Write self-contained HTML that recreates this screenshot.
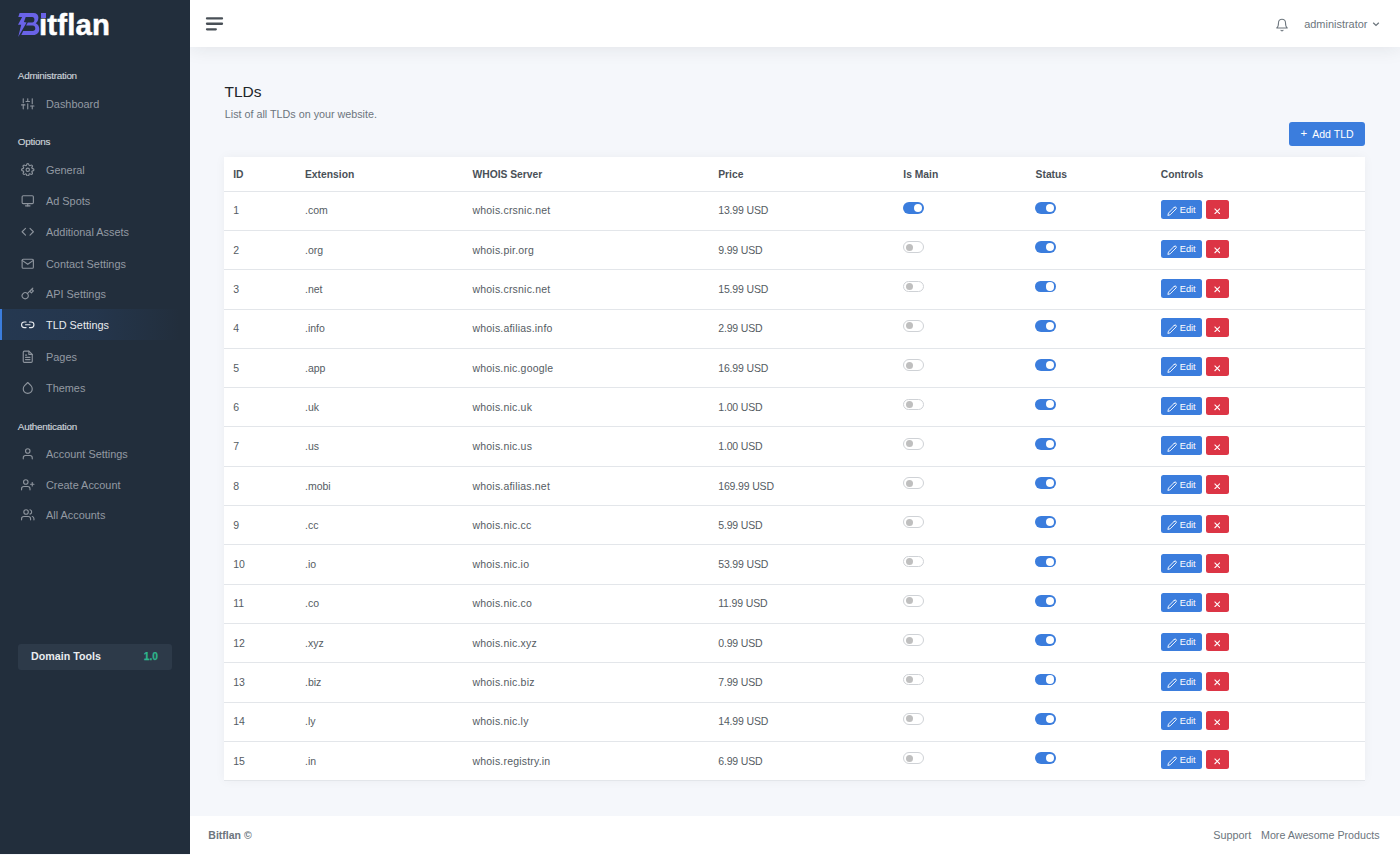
<!DOCTYPE html><html><head><meta charset="utf-8"><title>TLDs</title><style>
*{margin:0;padding:0;box-sizing:border-box}
html,body{width:1400px;height:855px;overflow:hidden;background:#f5f7fb;font-family:"Liberation Sans",sans-serif}
.t{position:absolute;white-space:nowrap}
.ic{position:absolute;display:block}
.abs{position:absolute}
</style></head><body>
<div class="abs" style="left:190px;top:816px;width:1210px;height:39px;background:#fff"></div>
<div class="abs" style="left:190px;top:0;width:1210px;height:47px;background:#fff;box-shadow:0 0 20px 0 rgba(33,37,41,.1)"></div>
<div class="abs" style="left:0;top:0;width:190px;height:854px;background:#222e3c"></div>
<svg class="ic" style="left:0;top:0;width:60px;height:45px" viewBox="0 0 60 45">
<path fill="#6a63e8" d="M19.6,12.9 H33.5 C36.6,12.9 38.4,14.8 38.4,17.6 C38.4,20.3 37.3,22.2 35.7,23.2 C38,24.1 39.3,26.3 39.3,29 C39.3,32.6 37,35 33.3,35 H21.3 L23.2,31 H32.6 C34.3,31 35.3,30 35.3,28.2 C35.3,26.5 34.3,25.4 32.6,25.4 H26.1 L27.8,22.5 H32.2 C33.6,22.5 34.4,21.5 34.4,19.7 C34.4,17.9 33.6,16.9 32.2,16.9 H18.3 Z"/>
<path fill="#6a63e8" d="M22.4,16.6 L25.9,16.6 L23.9,21.9 L26.6,22.6 L18.2,36.9 L21.2,24.75 L18.0,24.75 Z"/>
</svg>
<div class="t" style="left:39.00px;top:9.90px;font-size:29.3px;line-height:29.3px;color:#fff;font-weight:bold;letter-spacing:0.2px;-webkit-text-stroke:0.5px #fff">ıtflan</div>
<div class="abs" style="left:40.8px;top:13.1px;width:5.3px;height:4.6px;background:#6a63e8"></div>
<div class="t" style="left:17.80px;top:71.42px;font-size:9.9px;line-height:9.9px;color:#ced4da;font-weight:normal;letter-spacing:-0.25px;-webkit-text-stroke:0.15px #ced4da">Administration</div>
<div class="t" style="left:17.80px;top:136.62px;font-size:9.9px;line-height:9.9px;color:#ced4da;font-weight:normal;letter-spacing:-0.25px;-webkit-text-stroke:0.15px #ced4da">Options</div>
<div class="t" style="left:17.80px;top:421.62px;font-size:9.9px;line-height:9.9px;color:#ced4da;font-weight:normal;letter-spacing:-0.25px;-webkit-text-stroke:0.15px #ced4da">Authentication</div>
<svg class="ic" style="left:21px;top:96.7px;width:13.5px;height:13.5px;" viewBox="0 0 24 24" fill="none" stroke="#8d949d" stroke-width="2" stroke-linecap="round" stroke-linejoin="round"><line x1="4" y1="21" x2="4" y2="14"/><line x1="4" y1="10" x2="4" y2="3"/><line x1="12" y1="21" x2="12" y2="12"/><line x1="12" y1="8" x2="12" y2="3"/><line x1="20" y1="21" x2="20" y2="16"/><line x1="20" y1="12" x2="20" y2="3"/><line x1="1" y1="14" x2="7" y2="14"/><line x1="9" y1="8" x2="15" y2="8"/><line x1="17" y1="16" x2="23" y2="16"/></svg>
<div class="t" style="left:46.00px;top:98.77px;font-size:10.9px;line-height:10.9px;color:#939aa3;font-weight:normal;">Dashboard</div>
<svg class="ic" style="left:21px;top:162.6px;width:13.5px;height:13.5px;" viewBox="0 0 24 24" fill="none" stroke="#8d949d" stroke-width="2" stroke-linecap="round" stroke-linejoin="round"><circle cx="12" cy="12" r="3"/><path d="M19.4 15a1.65 1.65 0 0 0 .33 1.82l.06.06a2 2 0 0 1 0 2.83 2 2 0 0 1-2.83 0l-.06-.06a1.65 1.65 0 0 0-1.82-.33 1.65 1.65 0 0 0-1 1.51V21a2 2 0 0 1-2 2 2 2 0 0 1-2-2v-.09A1.650 1.65 0 0 0 9 19.4a1.65 1.65 0 0 0-1.82.33l-.06.06a2 2 0 0 1-2.83 0 2 2 0 0 1 0-2.830l.06-.06a1.65 1.65 0 0 0 .33-1.82 1.65 1.65 0 0 0-1.51-1H3a2 2 0 0 1-2-2 2 2 0 0 1 2-2h.09A1.65 1.65 0 0 0 4.6 9a1.65 1.65 0 0 0-.33-1.82l-.06-.06a2 2 0 0 1 0-2.83 2 2 0 0 1 2.83 0l.06.06a1.65 1.65 0 0 0 1.82.33H9a1.65 1.65 0 0 0 1-1.51V3a2 2 0 0 1 2-2 2 2 0 0 1 2 2v.09a1.65 1.65 0 0 0 1 1.51 1.65 1.65 0 0 0 1.82-.33l.06-.06a2 2 0 0 1 2.83 0 2 2 0 0 1 0 2.83l-.06.06a1.65 1.65 0 0 0-.33 1.82V9a1.65 1.65 0 0 0 1.51 1H21a2 2 0 0 1 2 2 2 2 0 0 1-2 2h-.09a1.65 1.65 0 0 0-1.51 1z"/></svg>
<div class="t" style="left:46.00px;top:164.67px;font-size:10.9px;line-height:10.9px;color:#939aa3;font-weight:normal;">General</div>
<svg class="ic" style="left:21px;top:193.7px;width:13.5px;height:13.5px;" viewBox="0 0 24 24" fill="none" stroke="#8d949d" stroke-width="2" stroke-linecap="round" stroke-linejoin="round"><rect x="2" y="3" width="20" height="14" rx="2" ry="2"/><line x1="8" y1="21" x2="16" y2="21"/><line x1="12" y1="17" x2="12" y2="21"/></svg>
<div class="t" style="left:46.00px;top:195.77px;font-size:10.9px;line-height:10.9px;color:#939aa3;font-weight:normal;">Ad Spots</div>
<svg class="ic" style="left:21px;top:225.0px;width:13.5px;height:13.5px;" viewBox="0 0 24 24" fill="none" stroke="#8d949d" stroke-width="2" stroke-linecap="round" stroke-linejoin="round"><polyline points="16 18 22 12 16 6"/><polyline points="8 6 2 12 8 18"/></svg>
<div class="t" style="left:46.00px;top:227.07px;font-size:10.9px;line-height:10.9px;color:#939aa3;font-weight:normal;">Additional Assets</div>
<svg class="ic" style="left:21px;top:256.5px;width:13.5px;height:13.5px;" viewBox="0 0 24 24" fill="none" stroke="#8d949d" stroke-width="2" stroke-linecap="round" stroke-linejoin="round"><path d="M4 4h16c1.1 0 2 .9 2 2v12c0 1.1-.9 2-2 2H4c-1.1 0-2-.9-2-2V6c0-1.1.9-2 2-2z"/><polyline points="22,6 12,13 2,6"/></svg>
<div class="t" style="left:46.00px;top:258.57px;font-size:10.9px;line-height:10.9px;color:#939aa3;font-weight:normal;">Contact Settings</div>
<svg class="ic" style="left:21px;top:287.3px;width:13.5px;height:13.5px;" viewBox="0 0 24 24" fill="none" stroke="#8d949d" stroke-width="2" stroke-linecap="round" stroke-linejoin="round"><path d="M21 2l-2 2m-7.61 7.61a5.5 5.5 0 1 1-7.778 7.778 5.5 5.5 0 0 1 7.777-7.777zm0 0L15.5 7.5m0 0l3 3L22 7l-3-3m-3.5 3.5L19 4"/></svg>
<div class="t" style="left:46.00px;top:289.37px;font-size:10.9px;line-height:10.9px;color:#939aa3;font-weight:normal;">API Settings</div>
<div class="abs" style="left:0;top:309px;width:190px;height:31px;background:linear-gradient(90deg,rgba(59,125,221,.13),rgba(59,125,221,.10) 50%,rgba(59,125,221,0) 95%)"></div>
<div class="abs" style="left:0;top:309px;width:2px;height:31px;background:#3b7ddd"></div>
<svg class="ic" style="left:21px;top:318.4px;width:13.5px;height:13.5px;" viewBox="0 0 24 24" fill="none" stroke="#e9ecef" stroke-width="2" stroke-linecap="round" stroke-linejoin="round"><path d="M15 7h3a5 5 0 0 1 5 5 5 5 0 0 1-5 5h-3m-6 0H6a5 5 0 0 1-5-5 5 5 0 0 1 5-5h3"/><line x1="8" y1="12" x2="16" y2="12"/></svg>
<div class="t" style="left:46.00px;top:320.47px;font-size:10.9px;line-height:10.9px;color:#e9ecef;font-weight:normal;">TLD Settings</div>
<svg class="ic" style="left:21px;top:349.59999999999997px;width:13.5px;height:13.5px;" viewBox="0 0 24 24" fill="none" stroke="#8d949d" stroke-width="2" stroke-linecap="round" stroke-linejoin="round"><path d="M14 2H6a2 2 0 0 0-2 2v16a2 2 0 0 0 2 2h12a2 2 0 0 0 2-2V8z"/><polyline points="14 2 14 8 20 8"/><line x1="16" y1="13" x2="8" y2="13"/><line x1="16" y1="17" x2="8" y2="17"/><polyline points="10 9 9 9 8 9"/></svg>
<div class="t" style="left:46.00px;top:351.67px;font-size:10.9px;line-height:10.9px;color:#939aa3;font-weight:normal;">Pages</div>
<svg class="ic" style="left:21px;top:380.7px;width:13.5px;height:13.5px;" viewBox="0 0 24 24" fill="none" stroke="#8d949d" stroke-width="2" stroke-linecap="round" stroke-linejoin="round"><path d="M12 2.69l5.66 5.66a8 8 0 1 1-11.31 0z"/></svg>
<div class="t" style="left:46.00px;top:382.77px;font-size:10.9px;line-height:10.9px;color:#939aa3;font-weight:normal;">Themes</div>
<svg class="ic" style="left:21px;top:447.0px;width:13.5px;height:13.5px;" viewBox="0 0 24 24" fill="none" stroke="#8d949d" stroke-width="2" stroke-linecap="round" stroke-linejoin="round"><path d="M20 21v-2a4 4 0 0 0-4-4H8a4 4 0 0 0-4 4v2"/><circle cx="12" cy="7" r="4"/></svg>
<div class="t" style="left:46.00px;top:449.07px;font-size:10.9px;line-height:10.9px;color:#939aa3;font-weight:normal;">Account Settings</div>
<svg class="ic" style="left:21px;top:478.0px;width:13.5px;height:13.5px;" viewBox="0 0 24 24" fill="none" stroke="#8d949d" stroke-width="2" stroke-linecap="round" stroke-linejoin="round"><path d="M16 21v-2a4 4 0 0 0-4-4H5a4 4 0 0 0-4 4v2"/><circle cx="8.5" cy="7" r="4"/><line x1="20" y1="8" x2="20" y2="14"/><line x1="23" y1="11" x2="17" y2="11"/></svg>
<div class="t" style="left:46.00px;top:480.07px;font-size:10.9px;line-height:10.9px;color:#939aa3;font-weight:normal;">Create Account</div>
<svg class="ic" style="left:21px;top:508.40000000000003px;width:13.5px;height:13.5px;" viewBox="0 0 24 24" fill="none" stroke="#8d949d" stroke-width="2" stroke-linecap="round" stroke-linejoin="round"><path d="M17 21v-2a4 4 0 0 0-4-4H5a4 4 0 0 0-4 4v2"/><circle cx="9" cy="7" r="4"/><path d="M23 21v-2a4 4 0 0 0-3-3.87"/><path d="M16 3.13a4 4 0 0 1 0 7.75"/></svg>
<div class="t" style="left:46.00px;top:510.47px;font-size:10.9px;line-height:10.9px;color:#939aa3;font-weight:normal;">All Accounts</div>
<div class="abs" style="left:17.5px;top:644px;width:154.5px;height:26px;background:#2d3a49;border-radius:3px"></div>
<div class="t" style="left:31.00px;top:651.24px;font-size:10.7px;line-height:10.7px;color:#e9ecef;font-weight:bold;">Domain Tools</div>
<div class="t" style="left:143.80px;top:651.67px;font-size:10.2px;line-height:10.2px;color:#2db68c;font-weight:bold;-webkit-text-stroke:0.25px #2db68c">1.0</div>
<svg class="ic" style="left:200px;top:10px;width:30px;height:30px" viewBox="0 0 30 30"><g stroke="#495057" stroke-width="2.3" stroke-linecap="round"><path d="M7,8.4 H22"/><path d="M7,13.75 H22"/><path d="M7,19.3 H15.8"/></g></svg>
<svg class="ic" style="left:1275px;top:17.5px;width:14px;height:14px;" viewBox="0 0 24 24" fill="none" stroke="#6c757d" stroke-width="1.8" stroke-linecap="round" stroke-linejoin="round"><path d="M18 8A6 6 0 0 0 6 8c0 7-3 9-3 9h18s-3-2-3-9"/><path d="M13.73 21a2 2 0 0 1-3.46 0"/></svg>
<div class="t" style="left:1304.20px;top:18.73px;font-size:10.95px;line-height:10.95px;color:#6c757d;font-weight:normal;">administrator</div>
<svg class="ic" style="left:1372px;top:20px;width:8px;height:8px" viewBox="0 0 8 8"><path d="M1.2,2.8 L4,5.4 L6.8,2.8" fill="none" stroke="#6c757d" stroke-width="1.3"/></svg>
<div class="t" style="left:224.50px;top:83.78px;font-size:15.5px;line-height:15.5px;color:#212529;font-weight:normal;">TLDs</div>
<div class="t" style="left:224.80px;top:108.60px;font-size:10.75px;line-height:10.75px;color:#6c757d;font-weight:normal;">List of all TLDs on your website.</div>
<div class="abs" style="left:1288.5px;top:122px;width:76.5px;height:24px;background:#3b7ddd;border-radius:3px"></div>
<div class="t" style="left:1300.50px;top:128.47px;font-size:11.5px;line-height:11.5px;color:#fff;font-weight:normal;">+</div>
<div class="t" style="left:1312.20px;top:129.27px;font-size:10.55px;line-height:10.55px;color:#fff;font-weight:normal;">Add TLD</div>
<div class="abs" style="left:224px;top:157px;width:1141px;height:624px;background:#fff;box-shadow:0 0 10px 0 rgba(33,37,41,.045)"></div>
<div class="abs" style="left:224px;top:780px;width:1141px;height:1px;background:#e3e6ea"></div>
<div class="t" style="left:233.20px;top:170.28px;font-size:10.3px;line-height:10.3px;color:#495057;font-weight:bold;">ID</div>
<div class="t" style="left:305.00px;top:170.28px;font-size:10.3px;line-height:10.3px;color:#495057;font-weight:bold;">Extension</div>
<div class="t" style="left:472.50px;top:170.28px;font-size:10.3px;line-height:10.3px;color:#495057;font-weight:bold;">WHOIS Server</div>
<div class="t" style="left:718.20px;top:170.28px;font-size:10.3px;line-height:10.3px;color:#495057;font-weight:bold;">Price</div>
<div class="t" style="left:903.30px;top:170.28px;font-size:10.3px;line-height:10.3px;color:#495057;font-weight:bold;">Is Main</div>
<div class="t" style="left:1035.60px;top:170.28px;font-size:10.3px;line-height:10.3px;color:#495057;font-weight:bold;">Status</div>
<div class="t" style="left:1160.80px;top:170.28px;font-size:10.3px;line-height:10.3px;color:#495057;font-weight:bold;">Controls</div>
<div class="abs" style="left:224px;top:190.60px;width:1141px;height:1px;background:#e3e6ea"></div>
<div class="t" style="left:233.20px;top:205.41px;font-size:10.5px;line-height:10.5px;color:#555c63;font-weight:normal;">1</div>
<div class="t" style="left:305.00px;top:205.41px;font-size:10.5px;line-height:10.5px;color:#555c63;font-weight:normal;">.com</div>
<div class="t" style="left:472.50px;top:205.41px;font-size:10.5px;line-height:10.5px;color:#555c63;font-weight:normal;letter-spacing:0.2px">whois.crsnic.net</div>
<div class="t" style="left:718.20px;top:205.41px;font-size:10.5px;line-height:10.5px;color:#555c63;font-weight:normal;letter-spacing:-0.15px">13.99 USD</div>
<div class="abs" style="left:903.2px;top:202.05px;width:20.7px;height:11.7px;border-radius:6px;background:#3b7ddd"></div>
<div class="abs" style="left:913.80px;top:203.80px;width:8.2px;height:8.2px;border-radius:50%;background:#fff"></div>
<div class="abs" style="left:1035.4px;top:202.05px;width:20.7px;height:11.7px;border-radius:6px;background:#3b7ddd"></div>
<div class="abs" style="left:1046.00px;top:203.80px;width:8.2px;height:8.2px;border-radius:50%;background:#fff"></div>
<div class="abs" style="left:1161px;top:200.20px;width:41px;height:18.8px;background:#3b7ddd;border-radius:2.5px"></div>
<svg class="ic" style="left:1167.0px;top:205.89999999999998px;width:10.3px;height:10.3px;" viewBox="0 0 24 24" fill="none" stroke="#fff" stroke-width="2.1" stroke-linecap="round" stroke-linejoin="round"><path d="M17 3a2.828 2.828 0 1 1 4 4L7.5 20.5 2 22l1.5-5.5L17 3z"/></svg>
<div class="t" style="left:1179.80px;top:206.11px;font-size:9.2px;line-height:9.2px;color:#fff;font-weight:normal;">Edit</div>
<div class="abs" style="left:1205.6px;top:200.20px;width:23.2px;height:18.8px;background:#dc3545;border-radius:2.5px"></div>
<svg class="ic" style="left:1213.8px;top:207.80px;width:6.6px;height:6.6px" viewBox="0 0 6.6 6.6"><path d="M0.6,0.6 L6.0,6.0 M6.0,0.6 L0.6,6.0" stroke="#fff" stroke-width="1.1"/></svg>
<div class="abs" style="left:224px;top:229.90px;width:1141px;height:1px;background:#e3e6ea"></div>
<div class="t" style="left:233.20px;top:244.71px;font-size:10.5px;line-height:10.5px;color:#555c63;font-weight:normal;">2</div>
<div class="t" style="left:305.00px;top:244.71px;font-size:10.5px;line-height:10.5px;color:#555c63;font-weight:normal;">.org</div>
<div class="t" style="left:472.50px;top:244.71px;font-size:10.5px;line-height:10.5px;color:#555c63;font-weight:normal;letter-spacing:0.2px">whois.pir.org</div>
<div class="t" style="left:718.20px;top:244.71px;font-size:10.5px;line-height:10.5px;color:#555c63;font-weight:normal;letter-spacing:-0.15px">9.99 USD</div>
<div class="abs" style="left:903.2px;top:241.35px;width:20.7px;height:11.7px;border-radius:6px;background:#fff;border:1px solid #cfd2d6"></div>
<div class="abs" style="left:906.00px;top:243.70px;width:7px;height:7px;border-radius:50%;background:#bfbfbf"></div>
<div class="abs" style="left:1035.4px;top:241.35px;width:20.7px;height:11.7px;border-radius:6px;background:#3b7ddd"></div>
<div class="abs" style="left:1046.00px;top:243.10px;width:8.2px;height:8.2px;border-radius:50%;background:#fff"></div>
<div class="abs" style="left:1161px;top:239.50px;width:41px;height:18.8px;background:#3b7ddd;border-radius:2.5px"></div>
<svg class="ic" style="left:1167.0px;top:245.19999999999996px;width:10.3px;height:10.3px;" viewBox="0 0 24 24" fill="none" stroke="#fff" stroke-width="2.1" stroke-linecap="round" stroke-linejoin="round"><path d="M17 3a2.828 2.828 0 1 1 4 4L7.5 20.5 2 22l1.5-5.5L17 3z"/></svg>
<div class="t" style="left:1179.80px;top:245.41px;font-size:9.2px;line-height:9.2px;color:#fff;font-weight:normal;">Edit</div>
<div class="abs" style="left:1205.6px;top:239.50px;width:23.2px;height:18.8px;background:#dc3545;border-radius:2.5px"></div>
<svg class="ic" style="left:1213.8px;top:247.10px;width:6.6px;height:6.6px" viewBox="0 0 6.6 6.6"><path d="M0.6,0.6 L6.0,6.0 M6.0,0.6 L0.6,6.0" stroke="#fff" stroke-width="1.1"/></svg>
<div class="abs" style="left:224px;top:269.20px;width:1141px;height:1px;background:#e3e6ea"></div>
<div class="t" style="left:233.20px;top:284.01px;font-size:10.5px;line-height:10.5px;color:#555c63;font-weight:normal;">3</div>
<div class="t" style="left:305.00px;top:284.01px;font-size:10.5px;line-height:10.5px;color:#555c63;font-weight:normal;">.net</div>
<div class="t" style="left:472.50px;top:284.01px;font-size:10.5px;line-height:10.5px;color:#555c63;font-weight:normal;letter-spacing:0.2px">whois.crsnic.net</div>
<div class="t" style="left:718.20px;top:284.01px;font-size:10.5px;line-height:10.5px;color:#555c63;font-weight:normal;letter-spacing:-0.15px">15.99 USD</div>
<div class="abs" style="left:903.2px;top:280.65px;width:20.7px;height:11.7px;border-radius:6px;background:#fff;border:1px solid #cfd2d6"></div>
<div class="abs" style="left:906.00px;top:283.00px;width:7px;height:7px;border-radius:50%;background:#bfbfbf"></div>
<div class="abs" style="left:1035.4px;top:280.65px;width:20.7px;height:11.7px;border-radius:6px;background:#3b7ddd"></div>
<div class="abs" style="left:1046.00px;top:282.40px;width:8.2px;height:8.2px;border-radius:50%;background:#fff"></div>
<div class="abs" style="left:1161px;top:278.80px;width:41px;height:18.8px;background:#3b7ddd;border-radius:2.5px"></div>
<svg class="ic" style="left:1167.0px;top:284.5px;width:10.3px;height:10.3px;" viewBox="0 0 24 24" fill="none" stroke="#fff" stroke-width="2.1" stroke-linecap="round" stroke-linejoin="round"><path d="M17 3a2.828 2.828 0 1 1 4 4L7.5 20.5 2 22l1.5-5.5L17 3z"/></svg>
<div class="t" style="left:1179.80px;top:284.71px;font-size:9.2px;line-height:9.2px;color:#fff;font-weight:normal;">Edit</div>
<div class="abs" style="left:1205.6px;top:278.80px;width:23.2px;height:18.8px;background:#dc3545;border-radius:2.5px"></div>
<svg class="ic" style="left:1213.8px;top:286.40px;width:6.6px;height:6.6px" viewBox="0 0 6.6 6.6"><path d="M0.6,0.6 L6.0,6.0 M6.0,0.6 L0.6,6.0" stroke="#fff" stroke-width="1.1"/></svg>
<div class="abs" style="left:224px;top:308.50px;width:1141px;height:1px;background:#e3e6ea"></div>
<div class="t" style="left:233.20px;top:323.31px;font-size:10.5px;line-height:10.5px;color:#555c63;font-weight:normal;">4</div>
<div class="t" style="left:305.00px;top:323.31px;font-size:10.5px;line-height:10.5px;color:#555c63;font-weight:normal;">.info</div>
<div class="t" style="left:472.50px;top:323.31px;font-size:10.5px;line-height:10.5px;color:#555c63;font-weight:normal;letter-spacing:0.2px">whois.afilias.info</div>
<div class="t" style="left:718.20px;top:323.31px;font-size:10.5px;line-height:10.5px;color:#555c63;font-weight:normal;letter-spacing:-0.15px">2.99 USD</div>
<div class="abs" style="left:903.2px;top:319.95px;width:20.7px;height:11.7px;border-radius:6px;background:#fff;border:1px solid #cfd2d6"></div>
<div class="abs" style="left:906.00px;top:322.30px;width:7px;height:7px;border-radius:50%;background:#bfbfbf"></div>
<div class="abs" style="left:1035.4px;top:319.95px;width:20.7px;height:11.7px;border-radius:6px;background:#3b7ddd"></div>
<div class="abs" style="left:1046.00px;top:321.70px;width:8.2px;height:8.2px;border-radius:50%;background:#fff"></div>
<div class="abs" style="left:1161px;top:318.10px;width:41px;height:18.8px;background:#3b7ddd;border-radius:2.5px"></div>
<svg class="ic" style="left:1167.0px;top:323.8px;width:10.3px;height:10.3px;" viewBox="0 0 24 24" fill="none" stroke="#fff" stroke-width="2.1" stroke-linecap="round" stroke-linejoin="round"><path d="M17 3a2.828 2.828 0 1 1 4 4L7.5 20.5 2 22l1.5-5.5L17 3z"/></svg>
<div class="t" style="left:1179.80px;top:324.01px;font-size:9.2px;line-height:9.2px;color:#fff;font-weight:normal;">Edit</div>
<div class="abs" style="left:1205.6px;top:318.10px;width:23.2px;height:18.8px;background:#dc3545;border-radius:2.5px"></div>
<svg class="ic" style="left:1213.8px;top:325.70px;width:6.6px;height:6.6px" viewBox="0 0 6.6 6.6"><path d="M0.6,0.6 L6.0,6.0 M6.0,0.6 L0.6,6.0" stroke="#fff" stroke-width="1.1"/></svg>
<div class="abs" style="left:224px;top:347.80px;width:1141px;height:1px;background:#e3e6ea"></div>
<div class="t" style="left:233.20px;top:362.61px;font-size:10.5px;line-height:10.5px;color:#555c63;font-weight:normal;">5</div>
<div class="t" style="left:305.00px;top:362.61px;font-size:10.5px;line-height:10.5px;color:#555c63;font-weight:normal;">.app</div>
<div class="t" style="left:472.50px;top:362.61px;font-size:10.5px;line-height:10.5px;color:#555c63;font-weight:normal;letter-spacing:0.2px">whois.nic.google</div>
<div class="t" style="left:718.20px;top:362.61px;font-size:10.5px;line-height:10.5px;color:#555c63;font-weight:normal;letter-spacing:-0.15px">16.99 USD</div>
<div class="abs" style="left:903.2px;top:359.25px;width:20.7px;height:11.7px;border-radius:6px;background:#fff;border:1px solid #cfd2d6"></div>
<div class="abs" style="left:906.00px;top:361.60px;width:7px;height:7px;border-radius:50%;background:#bfbfbf"></div>
<div class="abs" style="left:1035.4px;top:359.25px;width:20.7px;height:11.7px;border-radius:6px;background:#3b7ddd"></div>
<div class="abs" style="left:1046.00px;top:361.00px;width:8.2px;height:8.2px;border-radius:50%;background:#fff"></div>
<div class="abs" style="left:1161px;top:357.40px;width:41px;height:18.8px;background:#3b7ddd;border-radius:2.5px"></div>
<svg class="ic" style="left:1167.0px;top:363.09999999999997px;width:10.3px;height:10.3px;" viewBox="0 0 24 24" fill="none" stroke="#fff" stroke-width="2.1" stroke-linecap="round" stroke-linejoin="round"><path d="M17 3a2.828 2.828 0 1 1 4 4L7.5 20.5 2 22l1.5-5.5L17 3z"/></svg>
<div class="t" style="left:1179.80px;top:363.31px;font-size:9.2px;line-height:9.2px;color:#fff;font-weight:normal;">Edit</div>
<div class="abs" style="left:1205.6px;top:357.40px;width:23.2px;height:18.8px;background:#dc3545;border-radius:2.5px"></div>
<svg class="ic" style="left:1213.8px;top:365.00px;width:6.6px;height:6.6px" viewBox="0 0 6.6 6.6"><path d="M0.6,0.6 L6.0,6.0 M6.0,0.6 L0.6,6.0" stroke="#fff" stroke-width="1.1"/></svg>
<div class="abs" style="left:224px;top:387.10px;width:1141px;height:1px;background:#e3e6ea"></div>
<div class="t" style="left:233.20px;top:401.91px;font-size:10.5px;line-height:10.5px;color:#555c63;font-weight:normal;">6</div>
<div class="t" style="left:305.00px;top:401.91px;font-size:10.5px;line-height:10.5px;color:#555c63;font-weight:normal;">.uk</div>
<div class="t" style="left:472.50px;top:401.91px;font-size:10.5px;line-height:10.5px;color:#555c63;font-weight:normal;letter-spacing:0.2px">whois.nic.uk</div>
<div class="t" style="left:718.20px;top:401.91px;font-size:10.5px;line-height:10.5px;color:#555c63;font-weight:normal;letter-spacing:-0.15px">1.00 USD</div>
<div class="abs" style="left:903.2px;top:398.55px;width:20.7px;height:11.7px;border-radius:6px;background:#fff;border:1px solid #cfd2d6"></div>
<div class="abs" style="left:906.00px;top:400.90px;width:7px;height:7px;border-radius:50%;background:#bfbfbf"></div>
<div class="abs" style="left:1035.4px;top:398.55px;width:20.7px;height:11.7px;border-radius:6px;background:#3b7ddd"></div>
<div class="abs" style="left:1046.00px;top:400.30px;width:8.2px;height:8.2px;border-radius:50%;background:#fff"></div>
<div class="abs" style="left:1161px;top:396.70px;width:41px;height:18.8px;background:#3b7ddd;border-radius:2.5px"></div>
<svg class="ic" style="left:1167.0px;top:402.40000000000003px;width:10.3px;height:10.3px;" viewBox="0 0 24 24" fill="none" stroke="#fff" stroke-width="2.1" stroke-linecap="round" stroke-linejoin="round"><path d="M17 3a2.828 2.828 0 1 1 4 4L7.5 20.5 2 22l1.5-5.5L17 3z"/></svg>
<div class="t" style="left:1179.80px;top:402.61px;font-size:9.2px;line-height:9.2px;color:#fff;font-weight:normal;">Edit</div>
<div class="abs" style="left:1205.6px;top:396.70px;width:23.2px;height:18.8px;background:#dc3545;border-radius:2.5px"></div>
<svg class="ic" style="left:1213.8px;top:404.30px;width:6.6px;height:6.6px" viewBox="0 0 6.6 6.6"><path d="M0.6,0.6 L6.0,6.0 M6.0,0.6 L0.6,6.0" stroke="#fff" stroke-width="1.1"/></svg>
<div class="abs" style="left:224px;top:426.40px;width:1141px;height:1px;background:#e3e6ea"></div>
<div class="t" style="left:233.20px;top:441.21px;font-size:10.5px;line-height:10.5px;color:#555c63;font-weight:normal;">7</div>
<div class="t" style="left:305.00px;top:441.21px;font-size:10.5px;line-height:10.5px;color:#555c63;font-weight:normal;">.us</div>
<div class="t" style="left:472.50px;top:441.21px;font-size:10.5px;line-height:10.5px;color:#555c63;font-weight:normal;letter-spacing:0.2px">whois.nic.us</div>
<div class="t" style="left:718.20px;top:441.21px;font-size:10.5px;line-height:10.5px;color:#555c63;font-weight:normal;letter-spacing:-0.15px">1.00 USD</div>
<div class="abs" style="left:903.2px;top:437.85px;width:20.7px;height:11.7px;border-radius:6px;background:#fff;border:1px solid #cfd2d6"></div>
<div class="abs" style="left:906.00px;top:440.20px;width:7px;height:7px;border-radius:50%;background:#bfbfbf"></div>
<div class="abs" style="left:1035.4px;top:437.85px;width:20.7px;height:11.7px;border-radius:6px;background:#3b7ddd"></div>
<div class="abs" style="left:1046.00px;top:439.60px;width:8.2px;height:8.2px;border-radius:50%;background:#fff"></div>
<div class="abs" style="left:1161px;top:436.00px;width:41px;height:18.8px;background:#3b7ddd;border-radius:2.5px"></div>
<svg class="ic" style="left:1167.0px;top:441.7px;width:10.3px;height:10.3px;" viewBox="0 0 24 24" fill="none" stroke="#fff" stroke-width="2.1" stroke-linecap="round" stroke-linejoin="round"><path d="M17 3a2.828 2.828 0 1 1 4 4L7.5 20.5 2 22l1.5-5.5L17 3z"/></svg>
<div class="t" style="left:1179.80px;top:441.91px;font-size:9.2px;line-height:9.2px;color:#fff;font-weight:normal;">Edit</div>
<div class="abs" style="left:1205.6px;top:436.00px;width:23.2px;height:18.8px;background:#dc3545;border-radius:2.5px"></div>
<svg class="ic" style="left:1213.8px;top:443.60px;width:6.6px;height:6.6px" viewBox="0 0 6.6 6.6"><path d="M0.6,0.6 L6.0,6.0 M6.0,0.6 L0.6,6.0" stroke="#fff" stroke-width="1.1"/></svg>
<div class="abs" style="left:224px;top:465.70px;width:1141px;height:1px;background:#e3e6ea"></div>
<div class="t" style="left:233.20px;top:480.51px;font-size:10.5px;line-height:10.5px;color:#555c63;font-weight:normal;">8</div>
<div class="t" style="left:305.00px;top:480.51px;font-size:10.5px;line-height:10.5px;color:#555c63;font-weight:normal;">.mobi</div>
<div class="t" style="left:472.50px;top:480.51px;font-size:10.5px;line-height:10.5px;color:#555c63;font-weight:normal;letter-spacing:0.2px">whois.afilias.net</div>
<div class="t" style="left:718.20px;top:480.51px;font-size:10.5px;line-height:10.5px;color:#555c63;font-weight:normal;letter-spacing:-0.15px">169.99 USD</div>
<div class="abs" style="left:903.2px;top:477.15px;width:20.7px;height:11.7px;border-radius:6px;background:#fff;border:1px solid #cfd2d6"></div>
<div class="abs" style="left:906.00px;top:479.50px;width:7px;height:7px;border-radius:50%;background:#bfbfbf"></div>
<div class="abs" style="left:1035.4px;top:477.15px;width:20.7px;height:11.7px;border-radius:6px;background:#3b7ddd"></div>
<div class="abs" style="left:1046.00px;top:478.90px;width:8.2px;height:8.2px;border-radius:50%;background:#fff"></div>
<div class="abs" style="left:1161px;top:475.30px;width:41px;height:18.8px;background:#3b7ddd;border-radius:2.5px"></div>
<svg class="ic" style="left:1167.0px;top:480.99999999999994px;width:10.3px;height:10.3px;" viewBox="0 0 24 24" fill="none" stroke="#fff" stroke-width="2.1" stroke-linecap="round" stroke-linejoin="round"><path d="M17 3a2.828 2.828 0 1 1 4 4L7.5 20.5 2 22l1.5-5.5L17 3z"/></svg>
<div class="t" style="left:1179.80px;top:481.21px;font-size:9.2px;line-height:9.2px;color:#fff;font-weight:normal;">Edit</div>
<div class="abs" style="left:1205.6px;top:475.30px;width:23.2px;height:18.8px;background:#dc3545;border-radius:2.5px"></div>
<svg class="ic" style="left:1213.8px;top:482.90px;width:6.6px;height:6.6px" viewBox="0 0 6.6 6.6"><path d="M0.6,0.6 L6.0,6.0 M6.0,0.6 L0.6,6.0" stroke="#fff" stroke-width="1.1"/></svg>
<div class="abs" style="left:224px;top:505.00px;width:1141px;height:1px;background:#e3e6ea"></div>
<div class="t" style="left:233.20px;top:519.81px;font-size:10.5px;line-height:10.5px;color:#555c63;font-weight:normal;">9</div>
<div class="t" style="left:305.00px;top:519.81px;font-size:10.5px;line-height:10.5px;color:#555c63;font-weight:normal;">.cc</div>
<div class="t" style="left:472.50px;top:519.81px;font-size:10.5px;line-height:10.5px;color:#555c63;font-weight:normal;letter-spacing:0.2px">whois.nic.cc</div>
<div class="t" style="left:718.20px;top:519.81px;font-size:10.5px;line-height:10.5px;color:#555c63;font-weight:normal;letter-spacing:-0.15px">5.99 USD</div>
<div class="abs" style="left:903.2px;top:516.45px;width:20.7px;height:11.7px;border-radius:6px;background:#fff;border:1px solid #cfd2d6"></div>
<div class="abs" style="left:906.00px;top:518.80px;width:7px;height:7px;border-radius:50%;background:#bfbfbf"></div>
<div class="abs" style="left:1035.4px;top:516.45px;width:20.7px;height:11.7px;border-radius:6px;background:#3b7ddd"></div>
<div class="abs" style="left:1046.00px;top:518.20px;width:8.2px;height:8.2px;border-radius:50%;background:#fff"></div>
<div class="abs" style="left:1161px;top:514.60px;width:41px;height:18.8px;background:#3b7ddd;border-radius:2.5px"></div>
<svg class="ic" style="left:1167.0px;top:520.3000000000001px;width:10.3px;height:10.3px;" viewBox="0 0 24 24" fill="none" stroke="#fff" stroke-width="2.1" stroke-linecap="round" stroke-linejoin="round"><path d="M17 3a2.828 2.828 0 1 1 4 4L7.5 20.5 2 22l1.5-5.5L17 3z"/></svg>
<div class="t" style="left:1179.80px;top:520.51px;font-size:9.2px;line-height:9.2px;color:#fff;font-weight:normal;">Edit</div>
<div class="abs" style="left:1205.6px;top:514.60px;width:23.2px;height:18.8px;background:#dc3545;border-radius:2.5px"></div>
<svg class="ic" style="left:1213.8px;top:522.20px;width:6.6px;height:6.6px" viewBox="0 0 6.6 6.6"><path d="M0.6,0.6 L6.0,6.0 M6.0,0.6 L0.6,6.0" stroke="#fff" stroke-width="1.1"/></svg>
<div class="abs" style="left:224px;top:544.30px;width:1141px;height:1px;background:#e3e6ea"></div>
<div class="t" style="left:233.20px;top:559.11px;font-size:10.5px;line-height:10.5px;color:#555c63;font-weight:normal;">10</div>
<div class="t" style="left:305.00px;top:559.11px;font-size:10.5px;line-height:10.5px;color:#555c63;font-weight:normal;">.io</div>
<div class="t" style="left:472.50px;top:559.11px;font-size:10.5px;line-height:10.5px;color:#555c63;font-weight:normal;letter-spacing:0.2px">whois.nic.io</div>
<div class="t" style="left:718.20px;top:559.11px;font-size:10.5px;line-height:10.5px;color:#555c63;font-weight:normal;letter-spacing:-0.15px">53.99 USD</div>
<div class="abs" style="left:903.2px;top:555.75px;width:20.7px;height:11.7px;border-radius:6px;background:#fff;border:1px solid #cfd2d6"></div>
<div class="abs" style="left:906.00px;top:558.10px;width:7px;height:7px;border-radius:50%;background:#bfbfbf"></div>
<div class="abs" style="left:1035.4px;top:555.75px;width:20.7px;height:11.7px;border-radius:6px;background:#3b7ddd"></div>
<div class="abs" style="left:1046.00px;top:557.50px;width:8.2px;height:8.2px;border-radius:50%;background:#fff"></div>
<div class="abs" style="left:1161px;top:553.90px;width:41px;height:18.8px;background:#3b7ddd;border-radius:2.5px"></div>
<svg class="ic" style="left:1167.0px;top:559.6px;width:10.3px;height:10.3px;" viewBox="0 0 24 24" fill="none" stroke="#fff" stroke-width="2.1" stroke-linecap="round" stroke-linejoin="round"><path d="M17 3a2.828 2.828 0 1 1 4 4L7.5 20.5 2 22l1.5-5.5L17 3z"/></svg>
<div class="t" style="left:1179.80px;top:559.81px;font-size:9.2px;line-height:9.2px;color:#fff;font-weight:normal;">Edit</div>
<div class="abs" style="left:1205.6px;top:553.90px;width:23.2px;height:18.8px;background:#dc3545;border-radius:2.5px"></div>
<svg class="ic" style="left:1213.8px;top:561.50px;width:6.6px;height:6.6px" viewBox="0 0 6.6 6.6"><path d="M0.6,0.6 L6.0,6.0 M6.0,0.6 L0.6,6.0" stroke="#fff" stroke-width="1.1"/></svg>
<div class="abs" style="left:224px;top:583.60px;width:1141px;height:1px;background:#e3e6ea"></div>
<div class="t" style="left:233.20px;top:598.41px;font-size:10.5px;line-height:10.5px;color:#555c63;font-weight:normal;">11</div>
<div class="t" style="left:305.00px;top:598.41px;font-size:10.5px;line-height:10.5px;color:#555c63;font-weight:normal;">.co</div>
<div class="t" style="left:472.50px;top:598.41px;font-size:10.5px;line-height:10.5px;color:#555c63;font-weight:normal;letter-spacing:0.2px">whois.nic.co</div>
<div class="t" style="left:718.20px;top:598.41px;font-size:10.5px;line-height:10.5px;color:#555c63;font-weight:normal;letter-spacing:-0.15px">11.99 USD</div>
<div class="abs" style="left:903.2px;top:595.05px;width:20.7px;height:11.7px;border-radius:6px;background:#fff;border:1px solid #cfd2d6"></div>
<div class="abs" style="left:906.00px;top:597.40px;width:7px;height:7px;border-radius:50%;background:#bfbfbf"></div>
<div class="abs" style="left:1035.4px;top:595.05px;width:20.7px;height:11.7px;border-radius:6px;background:#3b7ddd"></div>
<div class="abs" style="left:1046.00px;top:596.80px;width:8.2px;height:8.2px;border-radius:50%;background:#fff"></div>
<div class="abs" style="left:1161px;top:593.20px;width:41px;height:18.8px;background:#3b7ddd;border-radius:2.5px"></div>
<svg class="ic" style="left:1167.0px;top:598.9000000000001px;width:10.3px;height:10.3px;" viewBox="0 0 24 24" fill="none" stroke="#fff" stroke-width="2.1" stroke-linecap="round" stroke-linejoin="round"><path d="M17 3a2.828 2.828 0 1 1 4 4L7.5 20.5 2 22l1.5-5.5L17 3z"/></svg>
<div class="t" style="left:1179.80px;top:599.11px;font-size:9.2px;line-height:9.2px;color:#fff;font-weight:normal;">Edit</div>
<div class="abs" style="left:1205.6px;top:593.20px;width:23.2px;height:18.8px;background:#dc3545;border-radius:2.5px"></div>
<svg class="ic" style="left:1213.8px;top:600.80px;width:6.6px;height:6.6px" viewBox="0 0 6.6 6.6"><path d="M0.6,0.6 L6.0,6.0 M6.0,0.6 L0.6,6.0" stroke="#fff" stroke-width="1.1"/></svg>
<div class="abs" style="left:224px;top:622.90px;width:1141px;height:1px;background:#e3e6ea"></div>
<div class="t" style="left:233.20px;top:637.71px;font-size:10.5px;line-height:10.5px;color:#555c63;font-weight:normal;">12</div>
<div class="t" style="left:305.00px;top:637.71px;font-size:10.5px;line-height:10.5px;color:#555c63;font-weight:normal;">.xyz</div>
<div class="t" style="left:472.50px;top:637.71px;font-size:10.5px;line-height:10.5px;color:#555c63;font-weight:normal;letter-spacing:0.2px">whois.nic.xyz</div>
<div class="t" style="left:718.20px;top:637.71px;font-size:10.5px;line-height:10.5px;color:#555c63;font-weight:normal;letter-spacing:-0.15px">0.99 USD</div>
<div class="abs" style="left:903.2px;top:634.35px;width:20.7px;height:11.7px;border-radius:6px;background:#fff;border:1px solid #cfd2d6"></div>
<div class="abs" style="left:906.00px;top:636.70px;width:7px;height:7px;border-radius:50%;background:#bfbfbf"></div>
<div class="abs" style="left:1035.4px;top:634.35px;width:20.7px;height:11.7px;border-radius:6px;background:#3b7ddd"></div>
<div class="abs" style="left:1046.00px;top:636.10px;width:8.2px;height:8.2px;border-radius:50%;background:#fff"></div>
<div class="abs" style="left:1161px;top:632.50px;width:41px;height:18.8px;background:#3b7ddd;border-radius:2.5px"></div>
<svg class="ic" style="left:1167.0px;top:638.2px;width:10.3px;height:10.3px;" viewBox="0 0 24 24" fill="none" stroke="#fff" stroke-width="2.1" stroke-linecap="round" stroke-linejoin="round"><path d="M17 3a2.828 2.828 0 1 1 4 4L7.5 20.5 2 22l1.5-5.5L17 3z"/></svg>
<div class="t" style="left:1179.80px;top:638.41px;font-size:9.2px;line-height:9.2px;color:#fff;font-weight:normal;">Edit</div>
<div class="abs" style="left:1205.6px;top:632.50px;width:23.2px;height:18.8px;background:#dc3545;border-radius:2.5px"></div>
<svg class="ic" style="left:1213.8px;top:640.10px;width:6.6px;height:6.6px" viewBox="0 0 6.6 6.6"><path d="M0.6,0.6 L6.0,6.0 M6.0,0.6 L0.6,6.0" stroke="#fff" stroke-width="1.1"/></svg>
<div class="abs" style="left:224px;top:662.20px;width:1141px;height:1px;background:#e3e6ea"></div>
<div class="t" style="left:233.20px;top:677.01px;font-size:10.5px;line-height:10.5px;color:#555c63;font-weight:normal;">13</div>
<div class="t" style="left:305.00px;top:677.01px;font-size:10.5px;line-height:10.5px;color:#555c63;font-weight:normal;">.biz</div>
<div class="t" style="left:472.50px;top:677.01px;font-size:10.5px;line-height:10.5px;color:#555c63;font-weight:normal;letter-spacing:0.2px">whois.nic.biz</div>
<div class="t" style="left:718.20px;top:677.01px;font-size:10.5px;line-height:10.5px;color:#555c63;font-weight:normal;letter-spacing:-0.15px">7.99 USD</div>
<div class="abs" style="left:903.2px;top:673.65px;width:20.7px;height:11.7px;border-radius:6px;background:#fff;border:1px solid #cfd2d6"></div>
<div class="abs" style="left:906.00px;top:676.00px;width:7px;height:7px;border-radius:50%;background:#bfbfbf"></div>
<div class="abs" style="left:1035.4px;top:673.65px;width:20.7px;height:11.7px;border-radius:6px;background:#3b7ddd"></div>
<div class="abs" style="left:1046.00px;top:675.40px;width:8.2px;height:8.2px;border-radius:50%;background:#fff"></div>
<div class="abs" style="left:1161px;top:671.80px;width:41px;height:18.8px;background:#3b7ddd;border-radius:2.5px"></div>
<svg class="ic" style="left:1167.0px;top:677.5px;width:10.3px;height:10.3px;" viewBox="0 0 24 24" fill="none" stroke="#fff" stroke-width="2.1" stroke-linecap="round" stroke-linejoin="round"><path d="M17 3a2.828 2.828 0 1 1 4 4L7.5 20.5 2 22l1.5-5.5L17 3z"/></svg>
<div class="t" style="left:1179.80px;top:677.71px;font-size:9.2px;line-height:9.2px;color:#fff;font-weight:normal;">Edit</div>
<div class="abs" style="left:1205.6px;top:671.80px;width:23.2px;height:18.8px;background:#dc3545;border-radius:2.5px"></div>
<svg class="ic" style="left:1213.8px;top:679.40px;width:6.6px;height:6.6px" viewBox="0 0 6.6 6.6"><path d="M0.6,0.6 L6.0,6.0 M6.0,0.6 L0.6,6.0" stroke="#fff" stroke-width="1.1"/></svg>
<div class="abs" style="left:224px;top:701.50px;width:1141px;height:1px;background:#e3e6ea"></div>
<div class="t" style="left:233.20px;top:716.31px;font-size:10.5px;line-height:10.5px;color:#555c63;font-weight:normal;">14</div>
<div class="t" style="left:305.00px;top:716.31px;font-size:10.5px;line-height:10.5px;color:#555c63;font-weight:normal;">.ly</div>
<div class="t" style="left:472.50px;top:716.31px;font-size:10.5px;line-height:10.5px;color:#555c63;font-weight:normal;letter-spacing:0.2px">whois.nic.ly</div>
<div class="t" style="left:718.20px;top:716.31px;font-size:10.5px;line-height:10.5px;color:#555c63;font-weight:normal;letter-spacing:-0.15px">14.99 USD</div>
<div class="abs" style="left:903.2px;top:712.95px;width:20.7px;height:11.7px;border-radius:6px;background:#fff;border:1px solid #cfd2d6"></div>
<div class="abs" style="left:906.00px;top:715.30px;width:7px;height:7px;border-radius:50%;background:#bfbfbf"></div>
<div class="abs" style="left:1035.4px;top:712.95px;width:20.7px;height:11.7px;border-radius:6px;background:#3b7ddd"></div>
<div class="abs" style="left:1046.00px;top:714.70px;width:8.2px;height:8.2px;border-radius:50%;background:#fff"></div>
<div class="abs" style="left:1161px;top:711.10px;width:41px;height:18.8px;background:#3b7ddd;border-radius:2.5px"></div>
<svg class="ic" style="left:1167.0px;top:716.8000000000001px;width:10.3px;height:10.3px;" viewBox="0 0 24 24" fill="none" stroke="#fff" stroke-width="2.1" stroke-linecap="round" stroke-linejoin="round"><path d="M17 3a2.828 2.828 0 1 1 4 4L7.5 20.5 2 22l1.5-5.5L17 3z"/></svg>
<div class="t" style="left:1179.80px;top:717.01px;font-size:9.2px;line-height:9.2px;color:#fff;font-weight:normal;">Edit</div>
<div class="abs" style="left:1205.6px;top:711.10px;width:23.2px;height:18.8px;background:#dc3545;border-radius:2.5px"></div>
<svg class="ic" style="left:1213.8px;top:718.70px;width:6.6px;height:6.6px" viewBox="0 0 6.6 6.6"><path d="M0.6,0.6 L6.0,6.0 M6.0,0.6 L0.6,6.0" stroke="#fff" stroke-width="1.1"/></svg>
<div class="abs" style="left:224px;top:740.80px;width:1141px;height:1px;background:#e3e6ea"></div>
<div class="t" style="left:233.20px;top:755.61px;font-size:10.5px;line-height:10.5px;color:#555c63;font-weight:normal;">15</div>
<div class="t" style="left:305.00px;top:755.61px;font-size:10.5px;line-height:10.5px;color:#555c63;font-weight:normal;">.in</div>
<div class="t" style="left:472.50px;top:755.61px;font-size:10.5px;line-height:10.5px;color:#555c63;font-weight:normal;letter-spacing:0.2px">whois.registry.in</div>
<div class="t" style="left:718.20px;top:755.61px;font-size:10.5px;line-height:10.5px;color:#555c63;font-weight:normal;letter-spacing:-0.15px">6.99 USD</div>
<div class="abs" style="left:903.2px;top:752.25px;width:20.7px;height:11.7px;border-radius:6px;background:#fff;border:1px solid #cfd2d6"></div>
<div class="abs" style="left:906.00px;top:754.60px;width:7px;height:7px;border-radius:50%;background:#bfbfbf"></div>
<div class="abs" style="left:1035.4px;top:752.25px;width:20.7px;height:11.7px;border-radius:6px;background:#3b7ddd"></div>
<div class="abs" style="left:1046.00px;top:754.00px;width:8.2px;height:8.2px;border-radius:50%;background:#fff"></div>
<div class="abs" style="left:1161px;top:750.40px;width:41px;height:18.8px;background:#3b7ddd;border-radius:2.5px"></div>
<svg class="ic" style="left:1167.0px;top:756.1px;width:10.3px;height:10.3px;" viewBox="0 0 24 24" fill="none" stroke="#fff" stroke-width="2.1" stroke-linecap="round" stroke-linejoin="round"><path d="M17 3a2.828 2.828 0 1 1 4 4L7.5 20.5 2 22l1.5-5.5L17 3z"/></svg>
<div class="t" style="left:1179.80px;top:756.31px;font-size:9.2px;line-height:9.2px;color:#fff;font-weight:normal;">Edit</div>
<div class="abs" style="left:1205.6px;top:750.40px;width:23.2px;height:18.8px;background:#dc3545;border-radius:2.5px"></div>
<svg class="ic" style="left:1213.8px;top:758.00px;width:6.6px;height:6.6px" viewBox="0 0 6.6 6.6"><path d="M0.6,0.6 L6.0,6.0 M6.0,0.6 L0.6,6.0" stroke="#fff" stroke-width="1.1"/></svg>
<div class="t" style="left:208.30px;top:830.11px;font-size:10.5px;line-height:10.5px;color:#6c757d;font-weight:bold;">Bitflan ©</div>
<div class="t" style="left:1213.20px;top:829.82px;font-size:10.85px;line-height:10.85px;color:#6c757d;font-weight:normal;">Support</div>
<div class="t" style="left:1261.00px;top:829.94px;font-size:10.7px;line-height:10.7px;color:#6c757d;font-weight:normal;">More Awesome Products</div>
</body></html>
